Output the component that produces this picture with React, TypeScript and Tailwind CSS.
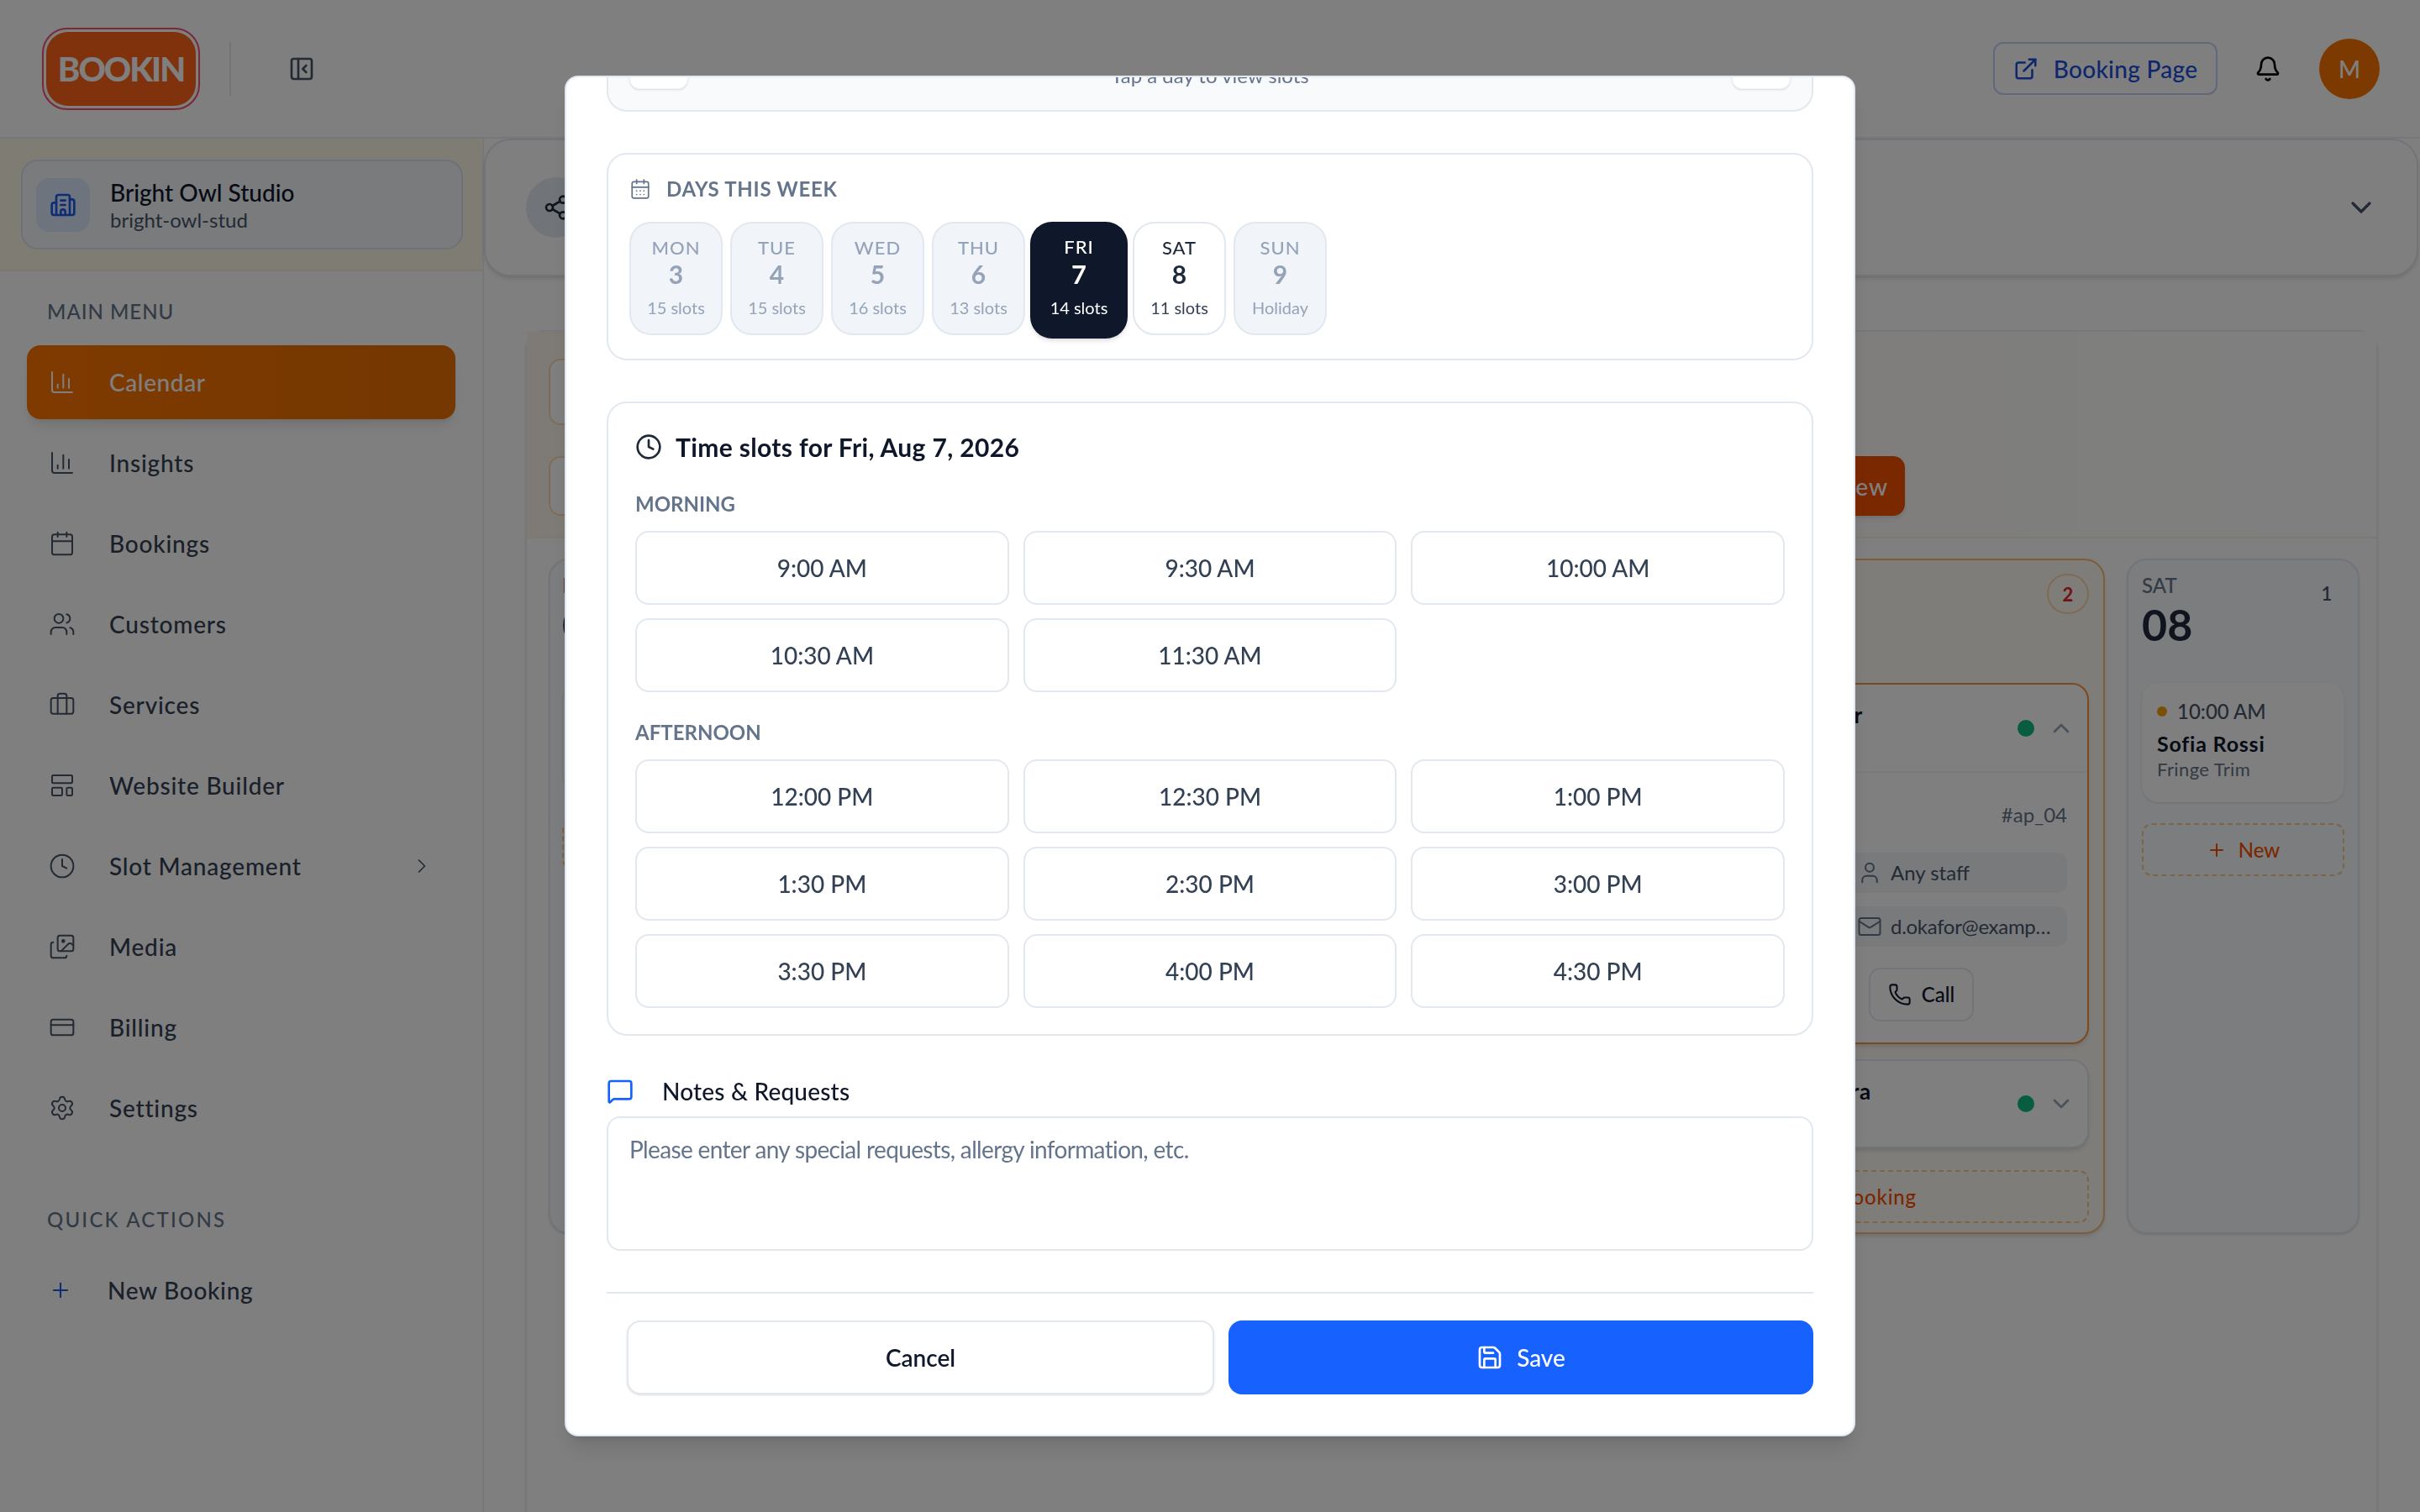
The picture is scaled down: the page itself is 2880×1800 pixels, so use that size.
import React from 'react';
import {
  BarChart3,
  Bell,
  Briefcase,
  Building2,
  Calendar,
  CalendarDays,
  ChevronDown,
  ChevronRight,
  ChevronUp,
  Clock,
  CreditCard,
  ExternalLink,
  Images,
  LayoutTemplate,
  Mail,
  MessageSquare,
  PanelLeftClose,
  Phone,
  Plus,
  Save,
  Settings,
  Share2,
  User,
  Users,
} from 'lucide-react';

const navItems = [
  { label: 'Insights', icon: BarChart3 },
  { label: 'Bookings', icon: Calendar },
  { label: 'Customers', icon: Users },
  { label: 'Services', icon: Briefcase },
  { label: 'Website Builder', icon: LayoutTemplate },
  { label: 'Slot Management', icon: Clock, chevron: true },
  { label: 'Media', icon: Images },
  { label: 'Billing', icon: CreditCard },
  { label: 'Settings', icon: Settings },
];

const days = [
  { name: 'MON', num: '3', note: '15 slots', state: 'off' },
  { name: 'TUE', num: '4', note: '15 slots', state: 'off' },
  { name: 'WED', num: '5', note: '16 slots', state: 'off' },
  { name: 'THU', num: '6', note: '13 slots', state: 'off' },
  { name: 'FRI', num: '7', note: '14 slots', state: 'active' },
  { name: 'SAT', num: '8', note: '11 slots', state: 'open' },
  { name: 'SUN', num: '9', note: 'Holiday', state: 'off' },
];

const morning = ['9:00 AM', '9:30 AM', '10:00 AM', '10:30 AM', '11:30 AM'];
const afternoon = ['12:00 PM', '12:30 PM', '1:00 PM', '1:30 PM', '2:30 PM', '3:00 PM', '3:30 PM', '4:00 PM', '4:30 PM'];

function DayCard({ day }: { day: (typeof days)[number] }) {
  if (day.state === 'active') {
    return (
      <div className="w-[116px] h-[139px] -mx-[3px] rounded-[26px] bg-[#0f172a] text-white flex flex-col items-center shadow-md">
        <span className="mt-[16px] text-[22px] leading-[28px] tracking-[1px] font-medium">{day.name}</span>
        <span className="text-[31px] leading-[36px] font-bold">{day.num}</span>
        <span className="mt-[8px] text-[20px] leading-[28px]">{day.note}</span>
      </div>
    );
  }
  const open = day.state === 'open';
  return (
    <div
      className={`w-[111px] h-[135px] rounded-[26px] border-2 border-[#e2e8f0] flex flex-col items-center ${
        open ? 'bg-white' : 'bg-[#f1f5f9]'
      }`}
    >
      <span className={`mt-[15px] text-[22px] leading-[28px] tracking-[1px] font-medium ${open ? 'text-[#1e293b]' : 'text-[#94a3b8]'}`}>
        {day.name}
      </span>
      <span className={`text-[30px] leading-[34px] font-bold ${open ? 'text-[#1e293b]' : 'text-[#94a3b8]'}`}>{day.num}</span>
      <span className={`mt-[9px] text-[20px] leading-[28px] ${open ? 'text-[#334155]' : 'text-[#94a3b8]'}`}>{day.note}</span>
    </div>
  );
}

function SlotGrid({ slots }: { slots: string[] }) {
  return (
    <div className="grid grid-cols-3 gap-x-[17px] gap-y-[16px]">
      {slots.map((slot) => (
        <button
          key={slot}
          className="h-[88px] rounded-[16px] border-2 border-[#e2e8f0] bg-white text-[28px] font-medium text-[#334155]"
        >
          {slot}
        </button>
      ))}
    </div>
  );
}

function BookingModal() {
  return (
    <div className="fixed inset-0 bg-black/50 flex items-center justify-center">
      <div className="w-[1536px] h-[1620px] rounded-[16px] border-2 border-[#e2e8f0] bg-white overflow-hidden px-[48px] shadow-xl">
        <div className="h-[120px] -mt-[79px] rounded-[24px] border-2 border-[#e2e8f0] bg-[#f8fafc] flex items-end justify-between px-[25px] pb-[25px]">
          <div className="w-[70px] h-[70px] rounded-[12px] bg-white border border-[#f1f5f9] shadow-sm" />
          <span className="text-[24px] leading-[32px] text-[#64748b]">Tap a day to view slots</span>
          <div className="w-[70px] h-[70px] rounded-[12px] bg-white border border-[#f1f5f9] shadow-sm" />
        </div>

        {/* Days */}
        <section className="mt-[49px] h-[247px] rounded-[24px] border-2 border-[#e2e8f0] px-[25px] pt-[25px]">
          <h3 className="flex items-center gap-[18px] h-[32px] text-[24px] font-bold tracking-[0.7px] text-[#64748b]">
            <CalendarDays size={26} strokeWidth={1.6} />
            DAYS THIS WEEK
          </h3>
          <div className="mt-[23px] flex gap-[9px]">
            {days.map((day) => (
              <DayCard key={day.name} day={day} />
            ))}
          </div>
        </section>

        {/* Time slots */}
        <section className="mt-[49px] h-[755px] rounded-[24px] border-2 border-[#e2e8f0] px-[32px] pt-[32px]">
          <h3 className="flex items-center gap-[16px] h-[40px] text-[30px] font-bold tracking-[0.35px] text-[#0f172a]">
            <Clock size={32} strokeWidth={2} className="text-[#1e293b]" />
            Time slots for Fri, Aug 7, 2026
          </h3>
          <div className="mt-[32px] h-[32px] text-[24px] leading-[32px] font-bold text-[#64748b]">MORNING</div>
          <div className="mt-[16px]">
            <SlotGrid slots={morning} />
          </div>
          <div className="mt-[32px] h-[32px] text-[24px] leading-[32px] font-bold text-[#64748b]">AFTERNOON</div>
          <div className="mt-[16px]">
            <SlotGrid slots={afternoon} />
          </div>
        </section>

        {/* Notes */}
        <div className="mt-[50px] flex items-center gap-[34px] h-[32px] text-[28px] font-medium tracking-[0.2px] text-[#0f172a]">
          <MessageSquare size={32} strokeWidth={2} className="text-[#1761ff]" />
          Notes &amp; Requests
        </div>
        <textarea
          readOnly
          placeholder="Please enter any special requests, allergy information, etc."
          className="mt-[14px] block w-full h-[160px] rounded-[16px] border-2 border-[#e2e8f0] px-[25px] py-[17px] text-[28px] leading-[40px] tracking-[-0.65px] placeholder:text-[#64748b] resize-none outline-none"
        />

        {/* Footer */}
        <div className="mt-[49px] border-t-2 border-[#e2e8f0] pt-[32px] pl-[24px] flex gap-[17px]">
          <button className="flex-1 h-[88px] rounded-[16px] border-2 border-[#e2e8f0] bg-white text-[28px] font-semibold text-[#0f172a] shadow-sm">
            Cancel
          </button>
          <button className="w-[696px] h-[88px] rounded-[16px] bg-[#1761ff] text-[28px] font-medium text-white flex items-center justify-center gap-[16px]">
            <Save size={32} strokeWidth={2} />
            Save
          </button>
        </div>
      </div>
    </div>
  );
}

function Sidebar() {
  return (
    <aside className="w-[576px] shrink-0 border-r-2 border-[#eef0f3] bg-white">
      <div className="h-[158px] bg-[#fef9e7] border-b-2 border-[#f8f1da] px-[25px] pt-[25px]">
        <div className="h-[107px] w-[526px] rounded-[20px] border-2 border-[#dbe4f0] bg-[#f3f6fa] flex items-center px-[16px] gap-[24px]">
          <div className="w-[64px] h-[64px] rounded-[16px] bg-[#dbe8fb] flex items-center justify-center">
            <Building2 size={32} strokeWidth={2} className="text-[#1d5be8]" />
          </div>
          <div>
            <div className="text-[28px] leading-[36px] font-medium text-[#0f172a]">Bright Owl Studio</div>
            <div className="text-[24px] leading-[30px] text-[#475569]">bright-owl-stud</div>
          </div>
        </div>
      </div>
      <div className="px-[32px]">
        <div className="mt-[32px] pl-[24px] text-[24px] leading-[32px] font-medium tracking-[1px] text-[#64748b]">MAIN MENU</div>
        <div className="mt-[24px] h-[88px] rounded-[16px] bg-gradient-to-r from-[#ff7500] to-[#e87000] shadow-lg flex items-center px-[26px] gap-[40px] text-[28px] font-medium tracking-[0.6px] text-white">
          <BarChart3 size={32} strokeWidth={1.5} />
          Calendar
        </div>
        <div className="mt-[8px] flex flex-col gap-[8px]">
          {navItems.map((item) => (
            <div key={item.label} className="h-[88px] flex items-center px-[26px] gap-[40px] text-[28px] font-medium tracking-[0.8px] text-[#334155]">
              <item.icon size={32} strokeWidth={1.5} className="text-[#475569]" />
              <span className="flex-1">{item.label}</span>
              {item.chevron && <ChevronRight size={28} strokeWidth={1.5} className="text-[#475569]" />}
            </div>
          ))}
        </div>
        <div className="mt-[73px] pl-[24px] text-[24px] leading-[32px] font-medium tracking-[2.2px] text-[#64748b]">QUICK ACTIONS</div>
        <div className="mt-[36px] h-[64px] flex items-center px-[26px] gap-[42px] text-[28px] font-medium tracking-[0.7px] text-[#334155]">
          <Plus size={28} strokeWidth={1.8} className="text-[#1d5be8]" />
          New Booking
        </div>
      </div>
    </aside>
  );
}

function DayColumn() {
  return (
    <div className="w-[277px] h-[804px] rounded-[24px] border-2 border-[#e2e8f0] bg-[#f8fafc] px-[16px] pt-[14px] shadow-sm">
      <div className="flex justify-between">
        <div>
          <div className="text-[24px] leading-[32px] font-medium text-[#64748b]">SAT</div>
          <div className="text-[52px] leading-[60px] font-bold text-[#1e293b]">08</div>
        </div>
        <div className="w-[42px] h-[42px] mt-[4px] rounded-full bg-[#f8fafc] flex items-center justify-center text-[22px] font-semibold text-[#475569]">1</div>
      </div>
      <div className="mt-[40px] h-[142px] rounded-[20px] bg-white shadow-sm px-[18px] py-[18px]">
        <div className="flex items-center gap-[12px] text-[24px] leading-[32px] font-medium text-[#475569]">
          <span className="w-[12px] h-[12px] rounded-full bg-[#f59e0b]" />
          10:00 AM
        </div>
        <div className="mt-[6px] text-[25px] leading-[32px] font-bold tracking-[0.8px] text-[#0f172a]">Sofia Rossi</div>
        <div className="text-[22px] leading-[30px] text-[#64748b] tracking-[0.4px]">Fringe Trim</div>
      </div>
      <div className="mt-[25px] h-[63px] rounded-[12px] border-2 border-dashed border-[#f8c88f] flex items-center justify-center gap-[14px] text-[24px] font-medium text-[#f55000]">
        <Plus size={24} />
        New
      </div>
    </div>
  );
}

function FridayColumn() {
  return (
    <div className="w-[600px] h-[804px] rounded-[24px] border-2 border-[#fdba74] bg-[#fffbf5] shadow-md pl-[18px] pr-[17px] pt-[16px]">
      <div className="h-[130px] flex justify-end">
        <div className="w-[50px] h-[48px] rounded-full border-2 border-[#fed7aa] flex items-center justify-center text-[22px] font-bold text-[#dc2626]">2</div>
      </div>
      <div className="h-[430px] rounded-[20px] border-2 border-[#fb923c] bg-white shadow-md">
        <div className="h-[105px] border-b-2 border-[#f1f5f9] flex items-center pr-[15px]">
          <span className="flex-1 text-right pr-[184px] -mt-[30px] text-[26px] font-bold tracking-[0.8px] text-[#0f172a]">Daniel Okafor</span>
          <span className="w-[20px] h-[20px] rounded-full bg-[#10b981]" />
          <ChevronUp size={32} strokeWidth={2} className="ml-[16px] text-[#94a3b8]" />
        </div>
        <div className="px-[24px]">
          <div className="mt-[34px] text-right text-[24px] leading-[32px] text-[#64748b]">#ap_04</div>
          <div className="mt-[29px] h-[48px] rounded-[12px] bg-[#f1f5f9] flex items-center pl-[259px] gap-[10px] text-[24px] text-[#475569]">
            <User size={30} strokeWidth={1.6} className="text-[#64748b]" />
            Any staff
          </div>
          <div className="mt-[16px] h-[48px] rounded-[12px] bg-[#f1f5f9] flex items-center pl-[259px] gap-[10px] text-[24px] tracking-[-0.3px] text-[#475569]">
            <Mail size={30} strokeWidth={1.6} className="text-[#64748b]" />
            <span className="w-[195px] truncate">d.okafor@example.com</span>
          </div>
          <div className="mt-[25px] ml-[273px] w-[125px] h-[64px] rounded-[14px] border-2 border-[#e2e8f0] flex items-center justify-center gap-[12px] text-[24px] font-medium text-[#0f172a]">
            <Phone size={28} strokeWidth={1.8} />
            Call
          </div>
        </div>
      </div>
      <div className="mt-[18px] h-[106px] rounded-[20px] border-2 border-[#e2e8f0] bg-white shadow-md flex items-center pr-[15px]">
        <span className="flex-1 text-right pr-[174px] -mt-[30px] text-[26px] font-bold tracking-[0.8px] text-[#0f172a]">Priya Nair Vera</span>
        <span className="w-[20px] h-[20px] rounded-full bg-[#10b981]" />
        <ChevronDown size={32} strokeWidth={2} className="ml-[16px] text-[#94a3b8]" />
      </div>
      <div className="mt-[26px] h-[63px] rounded-[12px] border-2 border-dashed border-[#f8c88f] flex items-center justify-center gap-[14px] text-[24px] font-medium tracking-[0.8px] text-[#f55000]">
        New Booking
      </div>
    </div>
  );
}

export default function App() {
  return (
    <div className="h-[1800px] overflow-hidden bg-white font-[Lato,sans-serif] flex flex-col">
      <header className="h-[165px] shrink-0 border-b-2 border-[#eceef1] flex items-center pl-[50px] pr-[48px]">
        <div className="w-[188px] h-[98px] rounded-[30px] border-2 border-[#f0506e] p-[3px]">
          <div className="w-full h-full rounded-[26px] bg-[#ff6418] flex items-center justify-center text-[40px] font-black tracking-[-2px] text-white">
            BOOKIN
          </div>
        </div>
        <div className="ml-[35px] w-[2px] h-[64px] bg-[#e2e8f0]" />
        <PanelLeftClose size={32} strokeWidth={2} className="ml-[68px] text-[#475569]" />
        <div className="ml-auto flex items-center">
          <div className="w-[267px] h-[63px] rounded-[12px] border-2 border-[#bfd3f5] flex items-center justify-center gap-[18px] text-[28px] font-medium tracking-[0.3px] text-[#1d4fd8]">
            <ExternalLink size={30} strokeWidth={2} />
            Booking Page
          </div>
          <Bell size={32} strokeWidth={2} className="ml-[44px] text-black" />
          <div className="ml-[45px] w-[72px] h-[72px] rounded-full bg-[#f97500] flex items-center justify-center text-[28px] font-medium text-white">M</div>
        </div>
      </header>

      <div className="flex flex-1 min-h-0">
        <Sidebar />
        <main className="flex-1 min-w-0">
          <div className="h-[164px] mr-[2px] rounded-[32px] border-2 border-[#e2e8f0] bg-white shadow-md flex items-center justify-between pl-[48px] pr-[46px]">
            <div className="w-[72px] h-[72px] rounded-full bg-[#e2e8f0] flex items-center justify-center">
              <Share2 size={32} className="text-[#1e293b]" />
            </div>
            <ChevronDown size={40} strokeWidth={2} className="text-[#475569]" />
          </div>
          <div className="mt-[64px] ml-[49px] mr-[50px] h-[1500px] rounded-t-[24px] border-2 border-[#eef0f3] bg-white shadow-sm">
            <div className="h-[246px] border-b-2 border-[#fdf3d8] bg-gradient-to-r from-[#fdf7ee] to-white pl-[26px] pt-[32px]">
              <div className="w-[800px] h-[79px] rounded-[14px] border-2 border-[#fcd9b0] bg-white" />
              <div className="mt-[37px] w-[1614px] h-[71px] flex justify-between">
                <div className="w-[800px] rounded-[14px] border-2 border-[#fcd9b0] bg-white" />
                <div className="w-[180px] pr-[20px] rounded-[14px] bg-[#f55000] shadow-md flex items-center justify-end text-[28px] font-medium tracking-[1px] text-white">
                  + New
                </div>
              </div>
            </div>
            <div className="mt-[24px] pl-[26px] pr-[20px] flex gap-[26px]">
              <div className="flex-1 h-[804px] rounded-[24px] border-2 border-[#e2e8f0] bg-[#f8fafc] px-[14px] pt-[14px] shadow-sm">
                <div className="text-[24px] leading-[32px] font-medium text-[#64748b]">MON</div>
                <div className="text-[52px] leading-[60px] font-bold text-[#1e293b]">03</div>
                <div className="mt-[40px] h-[130px] rounded-[20px] border border-[#e2e8f0] bg-white" />
                <div className="mt-[33px] h-[59px] rounded-[12px] border-2 border-dashed border-[#f8c88f]" />
              </div>
              <FridayColumn />
              <DayColumn />
            </div>
          </div>
        </main>
      </div>

      <BookingModal />
    </div>
  );
}
